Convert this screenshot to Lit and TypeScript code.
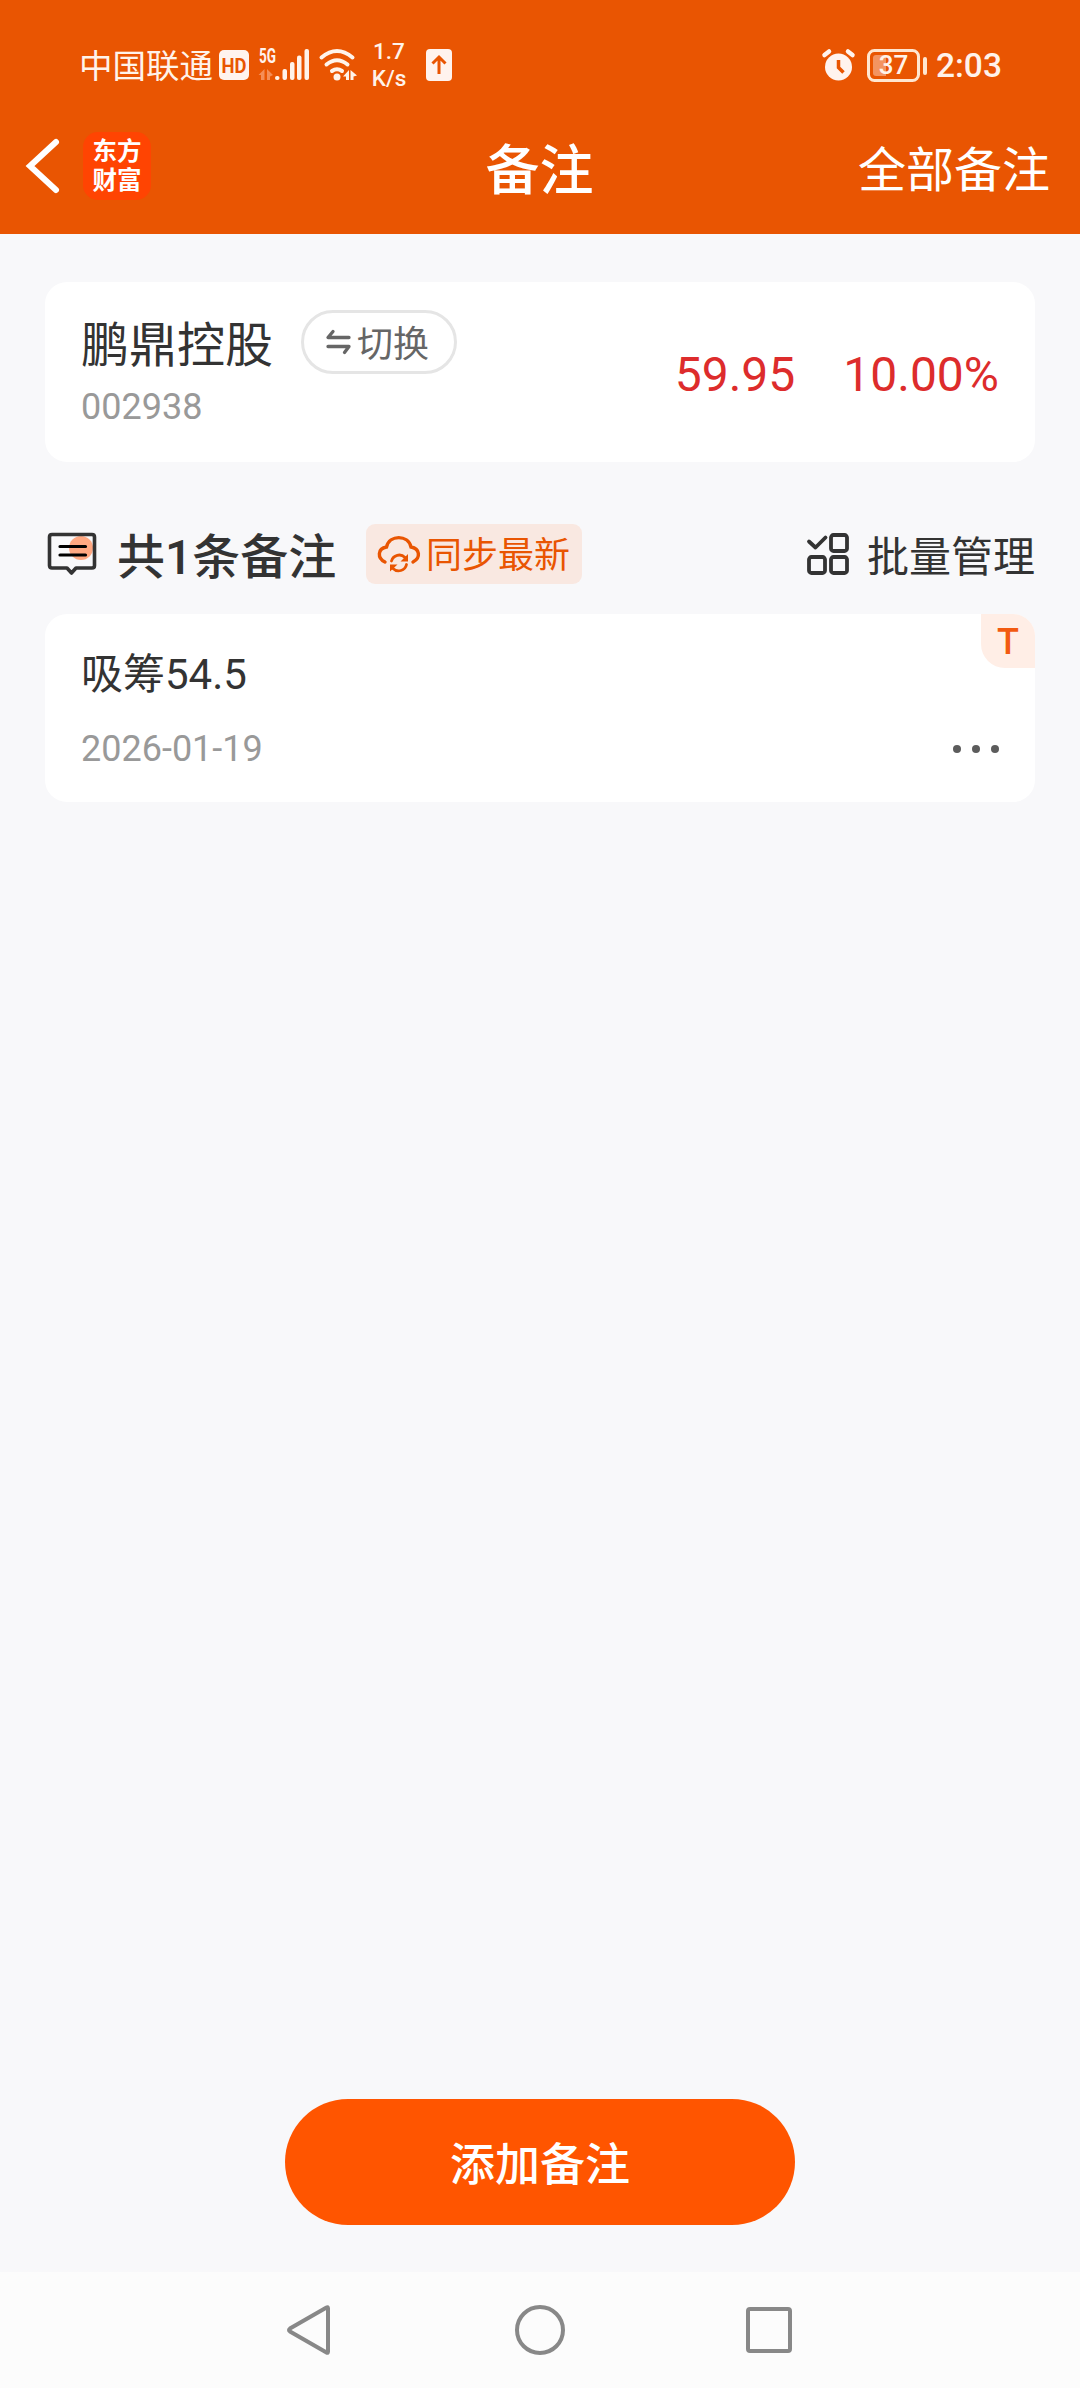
import { LitElement, html, css, svg } from "lit";
import { customElement } from "lit/decorators.js";

@customElement("app-root")
export class AppRoot extends LitElement {
  static styles = css`
    :host {
      display: flex;
      flex-direction: column;
      width: 1080px;
      height: 2388px;
      background: #f8f8fa;
      color: #333;
      font-family: Roboto, "Noto Sans CJK SC", sans-serif;
      overflow: hidden;
    }
    * { box-sizing: border-box; }
    svg { display: block; flex: none; overflow: visible; }
    .top { background: #e95502; height: 234px; color: #fff; flex: none; }
    .status {
      display: flex;
      height: 130px;
      padding: 0 76px 0 79px;
      align-items: center;
      color: #fff3ea;
    }
    .carrier { font-size: 33.5px; line-height: 40px; white-space: nowrap; width: 140px; padding-top: 3px; }
    .signal { margin-left: 9px; }
    .wifi { margin-left: 9px; }
    .speed {
      margin-left: 11px; width: 42px; text-align: center; font-size: 22.5px; line-height: 27px; font-weight: 500;
    }
    .up { margin-left: 16px; }
    .alarm { margin-left: auto; }
    .battery { margin-left: 12px; }
    .clock { margin-left: 8px; font-size: 33.5px; line-height: 40px; font-weight: 500; width: 68px; white-space: nowrap; padding-top: 1px; }
    .bar {
      display: grid;
      grid-template-columns: 1fr auto 1fr;
      align-items: center;
      height: 78px;
      padding: 0 30px 0 26px;
    }
    .left { display: flex; align-items: center; padding-bottom: 6px; }
    .logo {
      margin-left: 23px; width: 68px; height: 68px; border-radius: 15px; background: #ff4402;
      display: flex; flex-direction: column; align-items: center; justify-content: center;
      font-size: 24.5px; line-height: 29px; font-weight: 700; padding-bottom: 1px;
    }
    .title { font-size: 54px; line-height: 70px; font-weight: 500; padding: 5px 0 0 3px; }
    .all { font-size: 48px; line-height: 70px; text-align: right; padding-top: 3px; }
    .stock {
      margin: 48px 45px 0; height: 180px; border-radius: 22px; background: #fff; flex: none;
      display: flex; align-items: center; padding: 0 36px;
    }
    .ident { display: flex; flex-direction: column; height: 100%; padding-top: 28px; }
    .row { display: flex; align-items: center; height: 64px; }
    .name { font-size: 48px; line-height: 64px; width: 192px; white-space: nowrap; padding-top: 8px; }
    .switch {
      margin-left: 28px; width: 156px; height: 64px; border: 3px solid #e5e5e5; border-radius: 32px;
      display: flex; align-items: center; padding-left: 22px; color: #666; font-size: 36px; line-height: 58px;
      white-space: nowrap;
    }
    .switch svg { margin-right: 6px; }
    .switch span { padding-top: 5px; }
    .code { font-size: 36px; line-height: 42px; color: #999; margin-top: 12px; }
    .quote { margin-left: auto; display: flex; gap: 48px; font-size: 48px; line-height: 60px; color: #dd2c2c; padding-top: 6px; }
    .section { display: flex; align-items: center; height: 60px; margin: 62px 45px 0; flex: none; }
    .bubble { margin-bottom: 5px; }
    .count {
      margin-left: 20px; font-size: 48px; line-height: 60px; font-weight: 500; white-space: nowrap; width: 221px;
      padding-top: 7px;
    }
    .sync {
      margin-left: 28px; width: 216px; height: 60px; border-radius: 9px; background: #f9e8e1; color: #e95502;
      display: flex; align-items: center; padding-left: 11px; font-size: 36px; line-height: 60px; white-space: nowrap;
    }
    .sync svg { margin-right: 5px; }
    .sync span { padding-top: 3px; }
    .batch { margin-left: auto; display: flex; align-items: center; font-size: 42px; line-height: 60px; gap: 18px; }
    .batch svg { margin-left: -1px; }
    .batch span { padding-top: 7px; }
    .note {
      position: relative; margin: 30px 45px 0; height: 188px; border-radius: 22px; background: #fff; flex: none;
      padding: 35px 36px 0; overflow: hidden;
    }
    .text { font-size: 42px; line-height: 52px; }
    .meta { display: flex; align-items: center; justify-content: space-between; margin-top: 27px; height: 42px; }
    .date { font-size: 36px; line-height: 42px; color: #999; }
    .badge {
      position: absolute; top: 0; right: 0; width: 54px; height: 54px; background: #ffeee6;
      border-bottom-left-radius: 24px; color: #f25a10; font-size: 36px; line-height: 57px; font-weight: 500; text-align: center;
    }
    .space { flex: 1; }
    .add {
      align-self: center; flex: none; width: 510px; height: 126px; border-radius: 63px; background: #f50; color: #fff;
      font-size: 45px; line-height: 126px; font-weight: 500; text-align: center; margin-bottom: 47px; padding-top: 4px;
    }
    .nav {
      flex: none; height: 116px; background: #fcfcfc; display: flex; align-items: center;
      justify-content: space-between; padding: 0 288px 0 285px;
    }
  `;

  render() {
    return html`
      <div class="top">
        <div class="status">
          <span class="carrier">中国联通</span>
          <svg width="30" height="30" viewBox="0 0 30 30">
            <rect width="30" height="30" rx="5" fill="#fff3ee" />
            <text x="2.500" y="22.500" font-size="21" font-weight="700" fill="#e95502" textLength="25" lengthAdjust="spacingAndGlyphs">HD</text>
          </svg>
          ${this.signal()} ${this.wifi()}
          <span class="speed">1.7<br />K/s</span>
          <svg class="up" width="26" height="32" viewBox="0 0 26 32">
            <rect width="26" height="32" rx="4" fill="#fff3ee" />
            <path d="M13 25V8M6.500 14.500L13 8L19.500 14.500" fill="none" stroke="#e95502" stroke-width="3" />
          </svg>
          ${this.alarm()} ${this.battery()}
          <span class="clock">2:03</span>
        </div>
        <div class="bar">
          <div class="left">
            <svg width="34" height="56" viewBox="0 0 34 56">
              <path d="M30 4L4 28L30 52" fill="none" stroke="#fff" stroke-width="6" stroke-linecap="round" />
            </svg>
            <div class="logo"><span>东方</span><span>财富</span></div>
          </div>
          <div class="title">备注</div>
          <div class="all">全部备注</div>
        </div>
      </div>

      <div class="stock">
        <div class="ident">
          <div class="row">
            <span class="name">鹏鼎控股</span>
            <span class="switch">
              <svg width="25" height="26" viewBox="0 0 25 26">
                <path d="M7 2.500L2 8.500H23M2 17.500H23L18.500 23.500" fill="none" stroke="#666" stroke-width="3.300" stroke-linecap="round" stroke-linejoin="round" />
              </svg><span>切换</span>
            </span>
          </div>
          <div class="code">002938</div>
        </div>
        <div class="quote"><span>59.95</span><span>10.00%</span></div>
      </div>

      <div class="section">
        <svg class="bubble" width="52" height="48" viewBox="0 0 52 48">
          <circle cx="36" cy="20" r="12" fill="#ffa882" />
          <path d="M7 6.500H47Q49.500 6.500 49.500 9V37.500Q49.500 40 47 40H31L26.500 45L22 40H7Q4.500 40 4.500 37.500V9Q4.500 6.500 7 6.500Z" fill="none" stroke="#333" stroke-width="3.600" stroke-linejoin="round" />
          <path d="M15 18.500H40.500M15 27H40.500" stroke="#000" stroke-width="3.200" stroke-linecap="round" />
        </svg>
        <span class="count">共1条备注</span>
        <span class="sync">
          <svg width="44" height="38" viewBox="0 0 44 38">
            <g fill="none" stroke="#e95502" stroke-linecap="round">
              <path d="M8 27C0 23 0.500 13.500 9.500 12C12.500 -0.500 31 -0.500 34 12C43 13.500 44 23 36 27" stroke-width="3.400" />
              <path d="M14.500 26A8 8 0 0 1 28 22.500M29.500 29.500A8 8 0 0 1 16 33.500" stroke-width="2.800" />
            </g>
            <path d="M31 19V26.500H23.500ZM13 36.500V29.500H20.500Z" fill="#e95502" />
          </svg><span>同步最新</span>
        </span>
        <span class="batch">
          <svg width="42" height="42" viewBox="0 0 42 42" fill="none" stroke="#333" stroke-width="3.800" stroke-linecap="round" stroke-linejoin="round">
            <path d="M2 8.500L8.500 14.500L18.500 4.500" />
            <rect x="24" y="2" width="16" height="16" rx="2.500" />
            <rect x="2" y="24" width="16" height="16" rx="2.500" />
            <rect x="24" y="24" width="16" height="16" rx="2.500" />
          </svg><span>批量管理</span>
        </span>
      </div>

      <div class="note">
        <div class="text">吸筹54.5</div>
        <div class="meta">
          <span class="date">2026-01-19</span>
          <svg width="46" height="8" viewBox="0 0 46 8" fill="#5c5c5c">
            <circle cx="4" cy="4" r="4" /><circle cx="23" cy="4" r="4" /><circle cx="42" cy="4" r="4" />
          </svg>
        </div>
        <span class="badge">T</span>
      </div>

      <div class="space"></div>
      <div class="add">添加备注</div>

      <div class="nav">
        <svg width="48" height="54" viewBox="0 0 48 54"><path d="M41.500 4.500Q43 3.500 43 5.500V48.500Q43 50.500 41.500 49.500L5 28.500Q3 27 5 25.500Z" fill="none" stroke="#888" stroke-width="4" /></svg>
        <svg width="50" height="50" viewBox="0 0 50 50"><circle cx="25" cy="25" r="23" fill="none" stroke="#888" stroke-width="4" /></svg>
        <svg width="46" height="46" viewBox="0 0 46 46"><rect x="2" y="2" width="42" height="42" rx="2" fill="none" stroke="#888" stroke-width="4" /></svg>
      </div>
    `;
  }

  private signal() {
    const bars = [[16, 27, 4], [23.5, 20, 11], [31, 13, 18], [38, 6.5, 24.5], [45.5, 0, 31]];
    return html`<svg class="signal" width="52" height="32" viewBox="0 0 52 32">
      <text x="1" y="14" font-size="19.500" font-weight="700" fill="#fff3ee" textLength="17" lengthAdjust="spacingAndGlyphs">5G</text>
      <path d="M6.500 20V31H3V26H0.500ZM9 31V20L15 26L12 27.500V31Z" fill="#f58e57" />
      ${bars.map(([x, y, h]) => svg`<rect x=${x + 1} y=${y} width="4.500" height=${h} rx="2" fill="#fff3ea" />`)}
    </svg>`;
  }

  private wifi() {
    return html`<svg class="wifi" width="38" height="32" viewBox="0 0 38 32">
      <g fill="none" stroke="#fff3ea" stroke-width="4" stroke-linecap="round">
        <path d="M2.500 8.500Q18 -4.500 33.500 8.500" /><path d="M7.500 15.500Q18 7 28.500 15.500" /><path d="M13 22Q18 18.500 23 22" />
      </g>
      <circle cx="18" cy="28" r="3.500" fill="#fff3ea" />
      <path d="M30 21V31H27V27.500H24ZM31.500 31V21L38 26.500L34.500 27.500V31Z" fill="#fff3ea" />
    </svg>`;
  }

  private alarm() {
    return html`<svg class="alarm" width="33" height="32" viewBox="0 0 33 32">
      <circle cx="16.500" cy="18" r="13.500" fill="#fff3ee" />
      <path d="M2.500 6L7 2.500M30.500 6L26 2.500" stroke="#fff3ee" stroke-width="4.500" stroke-linecap="round" />
      <path d="M16.500 11V18.500L21.500 23.500" fill="none" stroke="#e95502" stroke-width="3.500" />
    </svg>`;
  }

  private battery() {
    return html`<svg class="battery" width="61" height="33" viewBox="0 0 61 33">
      <rect x="1.500" y="1.500" width="50" height="30" rx="6" fill="none" stroke="#ffe6d0" stroke-width="3" />
      <path d="M9 6H19V27H9Q6 27 6 24V9Q6 6 9 6Z" fill="#f39462" />
      <rect x="56" y="8" width="4" height="18" rx="2" fill="#ffe6d0" />
      <text x="26.500" y="25" font-size="26" font-weight="500" text-anchor="middle" fill="#fff3ea">37</text>
    </svg>`;
  }
}
